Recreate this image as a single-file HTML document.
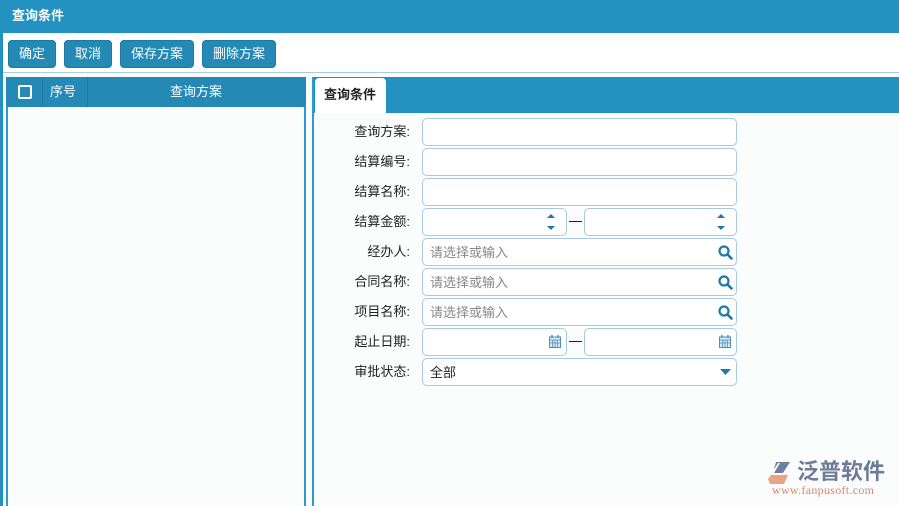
<!DOCTYPE html>
<html><head><meta charset="utf-8"><style>
*{box-sizing:border-box;margin:0;padding:0}
body{width:899px;height:506px;overflow:hidden;background:#fbfdfd;font-family:"Liberation Sans","Noto Sans CJK SC",sans-serif;font-size:13px;position:relative;color:#222;line-height:1.2}
.abs{position:absolute}
.hdr{left:0;top:0;width:899px;height:33px;background:#2492c0;color:#fff;font-weight:bold;padding:8px 12px;font-size:13px}
.lb{left:0;top:33px;width:3px;height:473px;background:#2492c0}
.tb{left:3px;top:33px;width:896px;height:40px;background:#fff}
.btn{top:40px;height:28px;background:#2489b5;color:#fff;border-radius:4px;border:1px solid #1d7aa3;text-align:center;line-height:26px;font-size:13px}
.line{left:3px;top:72px;width:896px;height:1px;background:#a9cde0}
.lp{left:6px;top:77px;width:300px;height:429px;border:2px solid #2e9bd0;border-top:none;border-bottom:none}
.lph{left:6px;top:77px;width:300px;height:30px;background:#2489b5;color:#fff}
.rp{left:312px;top:77px;width:587px;height:429px;border-left:2px solid #2e9bd0}
.rph{left:314px;top:77px;width:585px;height:36px;background:#2492c0}
.tab{left:315px;top:78px;width:71px;height:35px;background:#fff;border-radius:4px 4px 0 0;font-weight:bold;padding:9px 0 0 9px;color:#222}
.lab{left:320px;width:90px;text-align:right;font-size:13px;color:#222}
.in{height:28px;border:1px solid #a7c9e2;border-radius:5px;background:#fff;color:#888;padding:6px 7px}
</style></head><body>
<div class="abs hdr">查询条件</div>
<div class="abs lb"></div>
<div class="abs tb"></div>
<div class="abs btn" style="left:8px;width:48px">确定</div>
<div class="abs btn" style="left:64px;width:48px">取消</div>
<div class="abs btn" style="left:120px;width:74px">保存方案</div>
<div class="abs btn" style="left:202px;width:74px">删除方案</div>
<div class="abs line"></div>
<div class="abs lp"></div>
<div class="abs lph">
 <div class="abs" style="left:12px;top:8px;width:14px;height:14px;border:2px solid #fff;border-radius:2px"></div>
 <div class="abs" style="left:36px;top:0;width:1px;height:30px;background:#1f7aa3"></div>
 <div class="abs" style="left:44px;top:7px">序号</div>
 <div class="abs" style="left:81px;top:0;width:1px;height:30px;background:#1f7aa3"></div>
 <div class="abs" style="left:82px;top:7px;width:216px;text-align:center">查询方案</div>
</div>
<div class="abs rp"></div>
<div class="abs rph"></div>
<div class="abs tab">查询条件</div>

<div class="abs lab" style="top:124px">查询方案:</div>
<div class="abs in" style="left:422px;top:118px;width:315px"></div>
<div class="abs lab" style="top:154px">结算编号:</div>
<div class="abs in" style="left:422px;top:148px;width:315px"></div>
<div class="abs lab" style="top:184px">结算名称:</div>
<div class="abs in" style="left:422px;top:178px;width:315px"></div>
<div class="abs lab" style="top:214px">结算金额:</div>
<div class="abs in" style="left:422px;top:208px;width:145px"><svg class="abs" style="left:124px;top:4px" width="8" height="18"><path d="M0 5L4 1L8 5Z M0 13L4 17L8 13Z" fill="#1f7aa8"/></svg></div>
<div class="abs" style="left:569px;top:221px;width:13px;height:1px;background:#222"></div>
<div class="abs in" style="left:584px;top:208px;width:153px"><svg class="abs" style="left:132px;top:4px" width="8" height="18"><path d="M0 5L4 1L8 5Z M0 13L4 17L8 13Z" fill="#1f7aa8"/></svg></div>

<div class="abs lab" style="top:244px">经办人:</div>
<div class="abs in" style="left:422px;top:238px;width:315px">请选择或输入<svg class="abs" style="left:295px;top:6px" width="15" height="15"><circle cx="6" cy="6" r="4.5" fill="none" stroke="#1f7aa8" stroke-width="2.2"/><path d="M9.5 9.5L13.5 13.5" stroke="#1f7aa8" stroke-width="2.6" stroke-linecap="round"/></svg></div>
<div class="abs lab" style="top:274px">合同名称:</div>
<div class="abs in" style="left:422px;top:268px;width:315px">请选择或输入<svg class="abs" style="left:295px;top:6px" width="15" height="15"><circle cx="6" cy="6" r="4.5" fill="none" stroke="#1f7aa8" stroke-width="2.2"/><path d="M9.5 9.5L13.5 13.5" stroke="#1f7aa8" stroke-width="2.6" stroke-linecap="round"/></svg></div>
<div class="abs lab" style="top:304px">项目名称:</div>
<div class="abs in" style="left:422px;top:298px;width:315px">请选择或输入<svg class="abs" style="left:295px;top:6px" width="15" height="15"><circle cx="6" cy="6" r="4.5" fill="none" stroke="#1f7aa8" stroke-width="2.2"/><path d="M9.5 9.5L13.5 13.5" stroke="#1f7aa8" stroke-width="2.6" stroke-linecap="round"/></svg></div>

<div class="abs lab" style="top:334px">起止日期:</div>
<div class="abs in" style="left:422px;top:328px;width:145px"><svg class="abs" style="left:126px;top:6px" width="12" height="13"><rect x="0.5" y="2" width="11" height="10.5" fill="#dbe9f3" stroke="#4b8fbf"/><path d="M0.5 5H11.5M0.5 8H11.5M3.5 5V12.5M6 5V12.5M8.5 5V12.5" stroke="#4b8fbf" stroke-width="0.8"/><path d="M3 0V3M9 0V3" stroke="#4b8fbf" stroke-width="1.5"/></svg></div>
<div class="abs" style="left:569px;top:341px;width:13px;height:1px;background:#222"></div>
<div class="abs in" style="left:584px;top:328px;width:153px"><svg class="abs" style="left:134px;top:6px" width="12" height="13"><rect x="0.5" y="2" width="11" height="10.5" fill="#dbe9f3" stroke="#4b8fbf"/><path d="M0.5 5H11.5M0.5 8H11.5M3.5 5V12.5M6 5V12.5M8.5 5V12.5" stroke="#4b8fbf" stroke-width="0.8"/><path d="M3 0V3M9 0V3" stroke="#4b8fbf" stroke-width="1.5"/></svg></div>

<div class="abs lab" style="top:364px">审批状态:</div>
<div class="abs in" style="left:422px;top:358px;width:315px;color:#222">全部<svg class="abs" style="left:297px;top:10px" width="11" height="7"><path d="M0 0H11L5.5 6Z" fill="#1f7aa8"/></svg></div>

<svg class="abs" style="left:768px;top:461px" width="26" height="24"><path d="M8 1H22L15 12H5Z" fill="#6f7fa0"/><path d="M3 14H20L16 23H2L0 18Z" fill="#e9a486"/><path d="M4 12L10 2L12 2L6 12Z" fill="#fff"/></svg>
<div class="abs" style="left:797px;top:457px;font-size:22px;font-weight:bold;color:#6f7a98;font-family:'Noto Sans CJK SC',sans-serif;line-height:1.2">泛普软件</div>
<div class="abs" style="left:772px;top:483px;font-size:12px;color:#d9876a;font-family:'Liberation Serif',serif;letter-spacing:0.3px">www.fanpusoft.com</div>
</body></html>
